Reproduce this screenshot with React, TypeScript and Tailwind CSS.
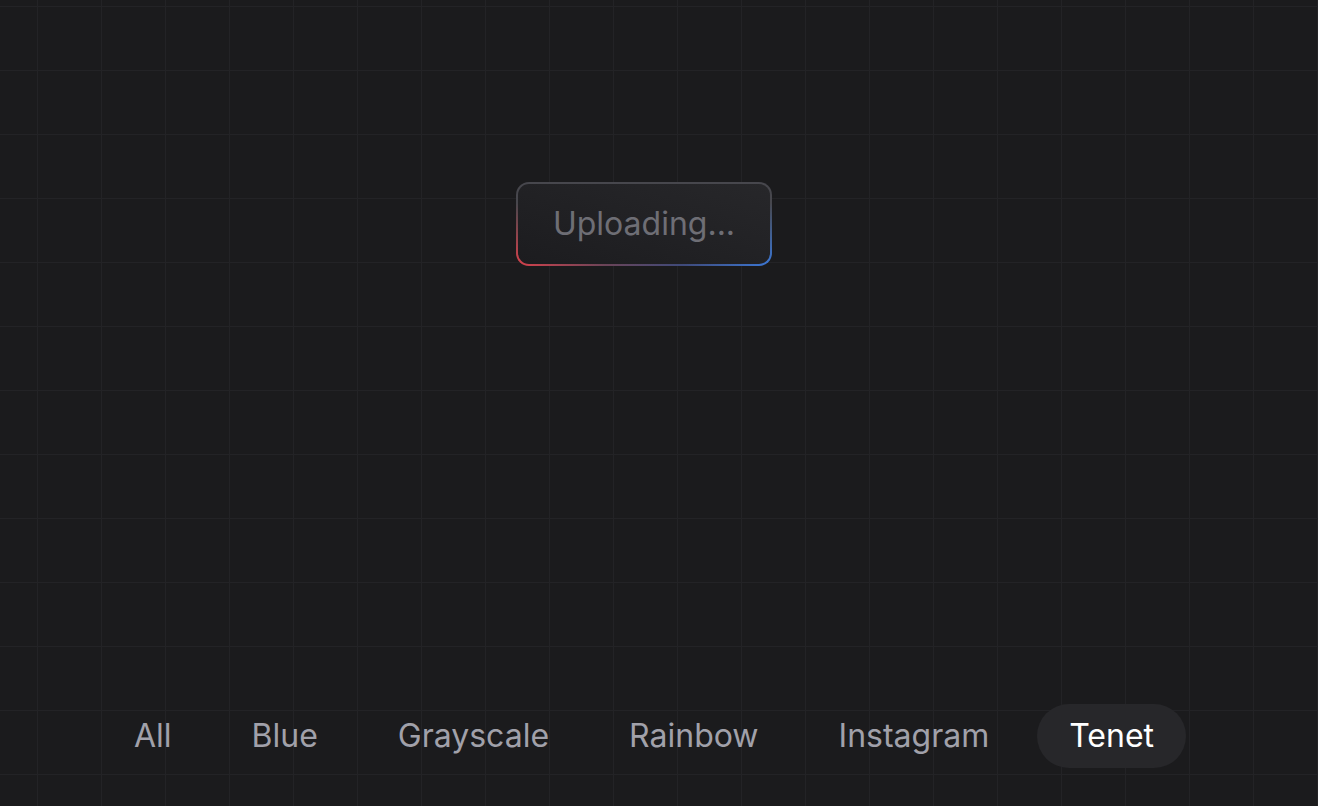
import { useState } from 'react'

const tabs = ['All', 'Blue', 'Grayscale', 'Rainbow', 'Instagram', 'Tenet']

export default function App() {
  const [active, setActive] = useState('Tenet')

  return (
    <div
      className="relative flex h-[806px] w-full flex-col items-center overflow-hidden bg-[#1b1b1d] pr-[30px] pt-[182px] pb-[38px] bg-[linear-gradient(to_right,#232326_1px,transparent_1px),linear-gradient(to_bottom,#232326_1px,transparent_1px)] bg-[size:64px_64px] bg-[position:37px_6px]"
      style={{ fontFamily: 'Inter, "Noto Sans", sans-serif' }}
    >
      {/* Upload button with gradient border */}
      <div className="h-[84px] w-[256px] rounded-[13px] p-[2px] bg-[linear-gradient(to_bottom,#47474d_25%,rgba(71,71,77,0)_100%),linear-gradient(to_right,#d8414b_0%,#6a4458_35%,#3f4a7a_65%,#3b78d8_100%)]">
        <div className="flex h-full w-full items-center justify-center rounded-[11px] bg-[linear-gradient(to_top_right,#1c1c1f,#27272a)]">
          <span className="text-[32px] leading-9 text-[#6e6e75]">Uploading...</span>
        </div>
      </div>

      {/* Filter tabs */}
      <div className="mt-auto flex items-center gap-4">
        {tabs.map((t) => (
          <button
            key={t}
            onClick={() => setActive(t)}
            className={`rounded-full px-8 py-[14px] text-[32px] leading-9 ${
              active === t ? 'bg-[#27272a] text-white' : 'text-[#a1a1aa]'
            }`}
          >
            {t}
          </button>
        ))}
      </div>
    </div>
  )
}
